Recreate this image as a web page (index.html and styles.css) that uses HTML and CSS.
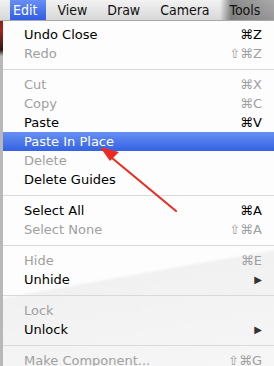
FILE: index.html
```html
<!DOCTYPE html>
<html>
<head>
    <meta charset="UTF-8">
    <meta name="viewport" content="width=device-width, initial-scale=1.0">
    <title>Edit Menu</title>
    <link rel="stylesheet" href="styles.css">
</head>
<body>
    <div class="screen">
        <div class="menubar">
            <span class="bar-item active">Edit</span>
            <span class="bar-item">View</span>
            <span class="bar-item">Draw</span>
            <span class="bar-item">Camera</span>
            <span class="bar-item">Tools</span>
        </div>

        <div class="menu">
            <div class="item"><span>Undo Close</span><span class="key">⌘Z</span></div>
            <div class="item off"><span>Redo</span><span class="key">⇧⌘Z</span></div>
            <div class="sep"></div>
            <div class="item off"><span>Cut</span><span class="key">⌘X</span></div>
            <div class="item off"><span>Copy</span><span class="key">⌘C</span></div>
            <div class="item"><span>Paste</span><span class="key">⌘V</span></div>
            <div class="item selected"><span>Paste In Place</span></div>
            <div class="item off"><span>Delete</span></div>
            <div class="item"><span>Delete Guides</span></div>
            <div class="sep"></div>
            <div class="item"><span>Select All</span><span class="key">⌘A</span></div>
            <div class="item off"><span>Select None</span><span class="key">⇧⌘A</span></div>
            <div class="sep"></div>
            <div class="item off"><span>Hide</span><span class="key">⌘E</span></div>
            <div class="item"><span>Unhide</span><span class="arrow">▶</span></div>
            <div class="sep"></div>
            <div class="item off"><span>Lock</span></div>
            <div class="item"><span>Unlock</span><span class="arrow">▶</span></div>
            <div class="sep"></div>
            <div class="item off"><span>Make Component...</span><span class="key">⇧⌘G</span></div>
        </div>

        <!-- annotation arrow drawn over the menu -->
        <svg class="pointer" width="274" height="366" viewBox="0 0 274 366">
            <line x1="176" y1="211" x2="106" y2="153" stroke="#ec2a1e" stroke-width="2" stroke-linecap="round"/>
            <polygon points="100,147 119,152 110,161" fill="#ec2a1e"/>
        </svg>
    </div>
</body>
</html>
```

FILE: styles.css
```css
body {
    margin: 0;
    font-family: 'DejaVu Sans', sans-serif;
}

.screen {
    position: relative;
    width: 274px;
    height: 366px;
    overflow: hidden;
    background: linear-gradient(#5a1c16 0, #a3261c 30px, #2b1a16 50px, #b8b8b8 56px, #b8b8b8);
}

.menubar {
    display: flex;
    height: 21px;
    padding-left: 10px;
    background: linear-gradient(90deg, rgba(0,0,0,0) 0, rgba(0,0,0,0) 220px, rgba(0,0,0,0.42) 231px, rgba(0,0,0,0.3) 274px),
                linear-gradient(#f2f2f2, #d8d8d8);
    border-bottom: 1px solid #a8a8a8;
    box-sizing: border-box;
}

.bar-item {
    padding: 0 9px 0 3px;
    margin-right: 8px;
    font-family: 'DejaVu Sans Condensed', 'DejaVu Sans', sans-serif;
    font-size: 14px;
    line-height: 20px;
    color: #111;
}

.bar-item.active {
    color: white;
    background: linear-gradient(#6a8ff5, #2f5de3);
}

.menu {
    height: 345px;
    margin-left: 3px;
    padding-top: 4px;
    box-sizing: border-box;
    background: linear-gradient(170deg, #fdfdfd 70%, #f1f1f1 71%, #f6f6f6);
    font-size: 13px;
}

.item {
    display: flex;
    justify-content: space-between;
    align-items: center;
    height: 19px;
    padding: 0 12px 0 21px;
    color: #000;
}

.item.off {
    color: #a0a0a0;
}

.item.selected {
    color: white;
    background: linear-gradient(#6690f2, #3462e4);
}

.key {
    font-size: 13px;
}

.arrow {
    font-size: 10px;
    color: #333;
}

.sep {
    height: 1px;
    margin: 6px 0 5px;
    background-color: #d9d9d9;
}

.pointer {
    position: absolute;
    top: 0;
    left: 0;
}
```
